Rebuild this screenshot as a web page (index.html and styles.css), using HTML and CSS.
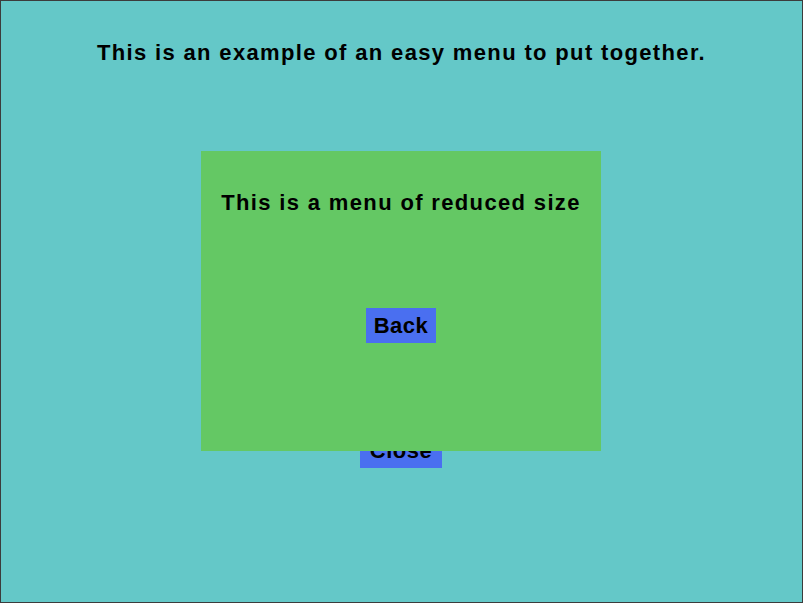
FILE: index.html
```html
<!DOCTYPE html>
<html>
<head>
<meta charset="utf-8">
<link rel="stylesheet" href="styles.css">
</head>
<body>
<div class="screen">
  <h1 class="title">This is an example of an easy menu to put together.</h1>
  <div class="main-actions">
    <button class="btn btn-close">Close</button>
  </div>
  <div class="submenu">
    <h2 class="sub-title">This is a menu of reduced size</h2>
    <button class="btn btn-back">Back</button>
  </div>
</div>
</body>
</html>
```
FILE: styles.css
```css
html, body {
  margin: 0;
  padding: 0;
}
body {
  font-family: "Liberation Sans", Arial, sans-serif;
}
.screen {
  position: relative;
  width: 803px;
  height: 603px;
  box-sizing: border-box;
  border: 1px solid #3c3c3c;
  background: #64c8c8;
  display: flex;
  flex-direction: column;
  align-items: center;
}
.title {
  margin: 39px 0 0;
  font-size: 22px;
  line-height: 26px;
  font-weight: bold;
  letter-spacing: 1.35px;
  color: #000;
}
.main-actions {
  margin-top: 367px;
  display: flex;
  justify-content: center;
}
.btn {
  border: none;
  padding: 0;
  background: #4a6ff0;
  color: #000;
  font-family: "Liberation Sans", Arial, sans-serif;
  font-weight: bold;
  font-size: 22px;
  letter-spacing: 0.5px;
  height: 35px;
  display: flex;
  align-items: center;
  justify-content: center;
}
.btn-close {
  width: 82px;
  margin-right: 1px;
}
.submenu {
  position: absolute;
  left: 200px;
  top: 150px;
  width: 400px;
  height: 300px;
  background: #64c864;
  display: flex;
  flex-direction: column;
  align-items: center;
}
.sub-title {
  margin: 39px 0 0;
  font-size: 22px;
  line-height: 26px;
  font-weight: bold;
  letter-spacing: 1.35px;
  color: #000;
}
.btn-back {
  margin-top: 92px;
  width: 70px;
}
```
